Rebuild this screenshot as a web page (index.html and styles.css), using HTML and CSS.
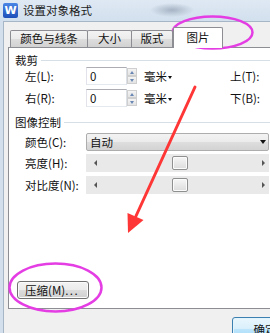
FILE: index.html
```html
<!DOCTYPE html>
<html>
<head>
<meta charset="utf-8">
<title>设置对象格式</title>
<link rel="stylesheet" href="styles.css">
</head>
<body>
<div class="window">
  <div class="titlebar">
    <div class="appicon">W</div>
    <div class="title">设置对象格式</div>
  </div>
  <div class="client">
    <div class="tabs">
      <div class="tab t1">颜色与线条</div>
      <div class="tab t2">大小</div>
      <div class="tab t3">版式</div>
      <div class="tab sel">图片</div>
    </div>
    <div class="panel">
      <div class="legend"><span>裁剪</span><i class="rule"></i></div>
      <div class="row">
        <span class="lbl">左(L):</span>
        <div class="spin"><div class="field">0</div><div class="btns"><b class="up"></b><b class="dn"></b></div></div>
        <span class="unit">毫米<i class="caret"></i></span>
        <span class="lbl2">上(T):</span>
      </div>
      <div class="row r2">
        <span class="lbl">右(R):</span>
        <div class="spin"><div class="field">0</div><div class="btns"><b class="up"></b><b class="dn"></b></div></div>
        <span class="unit">毫米<i class="caret"></i></span>
        <span class="lbl2">下(B):</span>
      </div>
      <div class="legend lg2"><span>图像控制</span><i class="rule"></i></div>
      <div class="row r3">
        <span class="lbl">颜色(C):</span>
        <div class="combo"><span>自动</span><i class="dcaret"></i></div>
      </div>
      <div class="row r4">
        <span class="lbl">亮度(H):</span>
        <div class="slider"><i class="la"></i><b class="thumb"></b><i class="ra"></i></div>
      </div>
      <div class="row r5">
        <span class="lbl">对比度(N):</span>
        <div class="slider"><i class="la"></i><b class="thumb"></b><i class="ra"></i></div>
      </div>
      <button class="btn">压缩(M)<span class="dots">...</span></button>
    </div>
    <div class="footer"><button class="ok">确定</button></div>
  </div>
  <svg class="overlay" viewBox="0 0 270 333" width="270" height="333">
    <ellipse cx="212.5" cy="32.5" rx="40" ry="16" fill="none" stroke="#e43de4" stroke-width="2.5"/>
    <ellipse cx="55.5" cy="287.5" rx="46" ry="24" fill="none" stroke="#e43de4" stroke-width="2.5"/>
    <line x1="195" y1="87" x2="136" y2="216" stroke="#ff3636" stroke-width="3" stroke-linecap="round"/>
    <polygon points="128,233 127.5,213 143.5,220" fill="#ff3636"/>
  </svg>
</div>
</body>
</html>
```

FILE: styles.css
```css
html, body {
  margin: 0;
  padding: 0;
}
body {
  width: 270px;
  height: 333px;
  overflow: hidden;
  background: #f0f0f0;
  font-family: "Noto Sans CJK SC", "Noto Sans", sans-serif;
  font-size: 11.5px;
  color: #111;
}
.window {
  position: relative;
  width: 300px;
  height: 333px;
  background: #d3dfec;
}
.titlebar {
  height: 21px;
  display: flex;
  align-items: center;
  padding-left: 3px;
  background:
    radial-gradient(ellipse 22px 7px at 172px 10px, rgba(105, 120, 140, 0.45), rgba(105, 120, 140, 0)),
    linear-gradient(#dfe9f4, #d2dfed);
}
.appicon {
  width: 15px;
  height: 15px;
  box-sizing: border-box;
  border-radius: 2px;
  background: linear-gradient(#4a86e6, #1d4fb8);
  color: #fff;
  font: bold 11px/15px "DejaVu Sans", sans-serif;
  text-align: center;
}
.title {
  margin-left: 5px;
  color: #1b1b1b;
  line-height: 21px;
}
.client {
  margin-left: 3px;
  border-left: 1px solid #a7b6c6;
  border-top: 1px solid #a7b6c6;
  background: #f0f0f0;
  height: 311px;
}
.tabs {
  display: flex;
  height: 21px;
  margin: 5px 0 -1px 6px;
  position: relative;
  z-index: 1;
}
.tab {
  box-sizing: border-box;
  height: 17px;
  margin-top: 3px;
  border: 1px solid #8c8e94;
  border-bottom: none;
  border-radius: 2px 2px 0 0;
  background: linear-gradient(#f3f3f3, #ebebeb 50%, #dedede 50%, #d2d2d2);
  display: flex;
  align-items: center;
  justify-content: center;
  line-height: 1;
}
.t1 { width: 78px; }
.t2 { width: 45px; margin-left: -1px; }
.t3 { width: 42px; margin-left: -1px; }
.sel {
  width: 50px;
  height: 21px;
  margin-top: 0;
  background: #fff;
  padding-bottom: 1px;
}
.panel {
  margin-left: 4px;
  background: #fff;
  border: 1px solid #8c8e94;
  padding: 6px 0 9px 6px;
}
.legend {
  display: flex;
  align-items: center;
  height: 13px;
  line-height: 13px;
}
.rule {
  flex: 1;
  height: 1px;
  margin-left: 3px;
  background: #d5dfe5;
  border-bottom: 1px solid #fff;
}
.lg2 { margin-top: 9px; }
.row {
  display: flex;
  align-items: center;
  height: 18px;
  margin-left: 10px;
}
.r2 { margin-top: 4px; }
.r3 { margin-top: 4px; }
.r4 { margin-top: 3px; }
.r5 { margin-top: 4px; }
.lbl { width: 61px; white-space: nowrap; }
.spin {
  display: flex;
  width: 51px;
  height: 18px;
}
.field {
  box-sizing: border-box;
  width: 41px;
  height: 18px;
  border: 1px solid;
  border-color: #abadb3 #dbdfe6 #e3e9ef #e2e3ea;
  padding-left: 3px;
  line-height: 16px;
}
.btns {
  width: 10px;
  display: flex;
  flex-direction: column;
  padding: 1px 0;
  box-sizing: border-box;
}
.btns b {
  flex: 1;
  box-sizing: border-box;
  border: 1px solid #cfcfcf;
  background: linear-gradient(#f4f4f4, #e3e3e3);
  display: flex;
  align-items: center;
  justify-content: center;
}
.btns b::after {
  content: "";
  border-left: 2.5px solid transparent;
  border-right: 2.5px solid transparent;
}
.up::after { border-bottom: 3px solid #6a87b3; }
.dn::after { border-top: 3px solid #6a87b3; }
.unit {
  margin-left: 7px;
  width: 86px;
  display: flex;
  align-items: center;
}
.caret {
  border-left: 2.5px solid transparent;
  border-right: 2.5px solid transparent;
  border-top: 3px solid #111;
  margin: 2px 0 0 1px;
}
.lbl2 { white-space: nowrap; }
.combo {
  box-sizing: border-box;
  width: 183px;
  height: 18px;
  border: 1px solid #adadad;
  border-radius: 2px;
  background: linear-gradient(#f3f3f3, #ebebeb 50%, #dedede 50%, #d3d3d3);
  display: flex;
  align-items: center;
  padding: 0 2px 0 3px;
}
.dcaret {
  margin-left: auto;
  border-left: 3px solid transparent;
  border-right: 3px solid transparent;
  border-top: 4px solid #111;
}
.slider {
  box-sizing: border-box;
  width: 183px;
  height: 18px;
  background: #e9e9e9;
  display: flex;
  align-items: center;
  padding: 0 4px 0 8px;
}
.la {
  border-right: 3px solid #555;
  border-top: 3px solid transparent;
  border-bottom: 3px solid transparent;
}
.ra {
  margin-left: auto;
  border-left: 3px solid #555;
  border-top: 3px solid transparent;
  border-bottom: 3px solid transparent;
}
.thumb {
  box-sizing: border-box;
  width: 16px;
  height: 14px;
  margin-left: 75px;
  border: 1px solid #8e8f8f;
  border-radius: 2px;
  background: linear-gradient(#f6f6f6, #dcdcdc);
  box-shadow: inset 0 0 0 1px #fbfbfb;
}
.btn {
  display: block;
  box-sizing: border-box;
  margin: 87px 0 0 2px;
  width: 72px;
  height: 18px;
  border: 1px solid #707070;
  border-radius: 3px;
  background: linear-gradient(#f3f3f3, #ebebeb 50%, #dddddd 50%, #cfcfcf);
  box-shadow: inset 0 0 0 1px #fbfbfb;
  font: inherit;
  color: #111;
  text-align: left;
  padding: 0 0 0 7px;
  line-height: 16px;
}
.dots { letter-spacing: 1.5px; }
.footer {
  padding: 8px 0 0 228px;
}
.ok {
  display: block;
  box-sizing: border-box;
  width: 66px;
  height: 23px;
  border: 1px solid #3c7fb1;
  border-radius: 3px;
  background: linear-gradient(#eaf6fd, #d9f0fc 50%, #bee6fd 50%, #a7d9f5);
  box-shadow: inset 0 0 0 1px #e4f4fc;
  font: inherit;
  color: #111;
  padding: 0;
  text-align: center;
}
.overlay {
  position: absolute;
  left: 0;
  top: 0;
  pointer-events: none;
}
```
